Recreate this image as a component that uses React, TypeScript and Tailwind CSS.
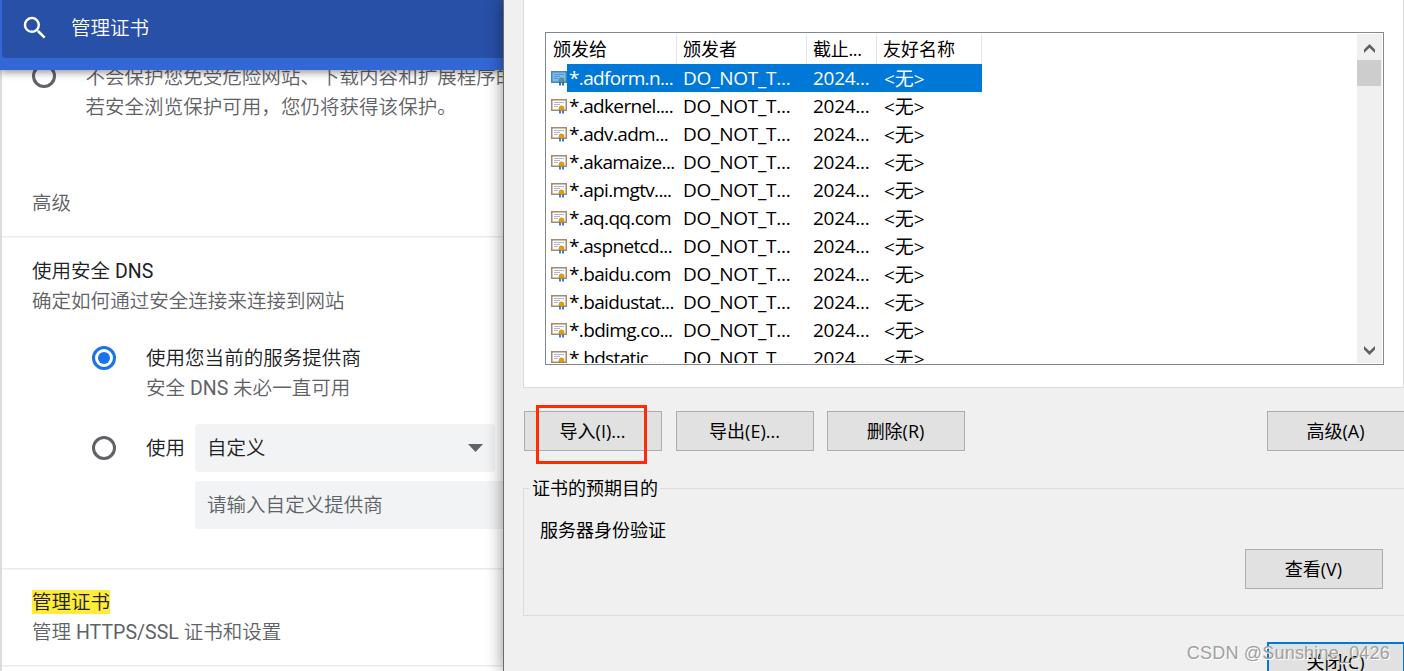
import { clsx } from "clsx";
import { MdSearch } from "react-icons/md";

const certificates = [
  "*.adform.n...",
  "*.adkernel....",
  "*.adv.adm...",
  "*.akamaize...",
  "*.api.mgtv....",
  "*.aq.qq.com",
  "*.aspnetcd...",
  "*.baidu.com",
  "*.baidustat...",
  "*.bdimg.co...",
  "*.bdstatic....",
];

const Radio = ({ checked }: { checked?: boolean }) => (
  <span
    className={clsx(
      "flex size-6 shrink-0 items-center justify-center rounded-full border-3",
      checked ? "border-[#1a73e8]" : "border-[#5f6368]"
    )}
  >
    {checked && <span className="size-3 rounded-full bg-[#1a73e8]" />}
  </span>
);

const Divider = () => (
  <div className="h-0.5 shrink-0 border-t border-[#ebebeb] bg-[#f5f5f5]" />
);

const CertIcon = ({ selected }: { selected?: boolean }) => (
  <svg width="16" height="15" viewBox="0 0 16 15" className="mt-px shrink-0">
    <rect
      x="0.75"
      y="0.75"
      width="14.5"
      height="10.5"
      fill={selected ? "#7cbcec" : "#fffdf8"}
      stroke={selected ? "#4b86ad" : "#a08a70"}
      strokeWidth="1.5"
    />
    <path
      d="M3 3.5h10M3 5.5h6M3 7.5h4"
      stroke={selected ? "#5a97d8" : "#b0b2e0"}
      strokeWidth="1"
    />
    <path
      d="M9 11v3.5M12 11v3.5"
      stroke={selected ? "#1263cf" : "#2f6cf0"}
      strokeWidth="1.8"
    />
    <circle
      cx="10.5"
      cy="9.3"
      r="2.4"
      fill={selected ? "#64938e" : "#e0a00c"}
      stroke={selected ? "#467b83" : "#c48a08"}
      strokeWidth="0.8"
    />
  </svg>
);

const DialogButton = ({ label, className }: { label: string; className?: string }) => (
  <button
    className={clsx(
      "h-10 w-[138px] shrink-0 border-[#adadad] bg-[#e1e1e1] pr-px text-center whitespace-nowrap",
      className ?? "border"
    )}
  >
    {label}
  </button>
);

const Settings = () => (
  <div className="flex h-full w-[503px] shrink-0 flex-col bg-[#dcdcdc] font-['Roboto','Noto_Sans_CJK_SC',sans-serif] text-[19.5px] leading-[30px] font-[350] tracking-[0.04px] text-[#5f6368]">
    <header className="relative z-10 h-[70px] shrink-0 bg-[#3367d6] pl-0.5 shadow-[0_2px_8px_rgba(0,0,0,0.45)]">
      <div className="flex h-[58px] items-center rounded-bl bg-[#2850a7] pl-[18px] text-white">
        <MdSearch className="-mt-0.5 size-[30px]" />
        <span className="ml-[21px]">管理证书</span>
      </div>
    </header>

    <div className="ml-0.5 flex flex-1 flex-col bg-white">
      <div className="-mt-[7px] flex shrink-0 pl-[30px] whitespace-nowrap">
        <div className="pt-px">
          <Radio />
        </div>
        <div className="ml-[29.5px]">
          <p>不会保护您免受危险网站、下载内容和扩展程序的</p>
          <p>若安全浏览保护可用，您仍将获得该保护。</p>
        </div>
      </div>

      <h2 className="mt-[66px] mb-[17px] pl-[30px]">高级</h2>
      <Divider />

      <div className="mt-[19px] pl-[30px]">
        <p className="text-[#202124]">
          使用安全 <span className="font-normal">DNS</span>
        </p>
        <p>确定如何通过安全连接来连接到网站</p>
      </div>

      <div className="mt-[27px] flex pl-[90px]">
        <div className="pt-0.5">
          <Radio checked />
        </div>
        <div className="ml-[30px]">
          <p className="text-[#202124]">使用您当前的服务提供商</p>
          <p>
            安全 <span className="font-normal">DNS</span> 未必一直可用
          </p>
        </div>
      </div>

      <div className="mt-5 flex items-center pl-[90px] text-[#202124]">
        <Radio />
        <span className="mt-0.5 ml-[30px] w-[49px] whitespace-nowrap">使用</span>
        <div className="flex h-12 w-[300px] items-center justify-between rounded bg-[#f1f3f4] pr-3 pl-3">
          <span className="mt-0.5">自定义</span>
          <svg width="15" height="8" viewBox="0 0 15 8">
            <path d="M0 0h15L7.5 8z" fill="#5f6368" />
          </svg>
        </div>
      </div>
      <div className="mt-[9px] mb-[39px] ml-[193px] flex h-12 shrink-0 items-center rounded-l bg-[#f1f3f4] pt-0.5 pl-3">
        请输入自定义提供商
      </div>
      <Divider />

      <div className="mt-[18px] mb-[17px] pl-[30px]">
        <p className="flex h-[30px] items-center">
          <mark className="-mt-0.5 h-6 bg-[#ffeb3b] leading-[26px] text-[#202124]">管理证书</mark>
        </p>
        <p>
          管理 <span className="font-normal">HTTPS/SSL</span> 证书和设置
        </p>
      </div>
      <Divider />
    </div>
  </div>
);

const CertificateList = () => (
  <div className="flex h-[333px] w-[839px] overflow-hidden border border-[#828790] bg-white">
    <div className="h-[330px] w-[436px] shrink-0 overflow-hidden pt-px">
      <div className="flex h-[30px] items-center text-[18px]">
        <span className="h-full w-[131px] border-r border-[#e5e5e5] pl-[7px] leading-[31px]">颁发给</span>
        <span className="h-full w-[130px] border-r border-[#e5e5e5] pl-1.5 leading-[31px]">颁发者</span>
        <span className="h-full w-[70px] border-r border-[#e5e5e5] pl-1.5 leading-[31px] tracking-[-0.3px]">截止...</span>
        <span className="h-full w-[105px] border-r border-[#e5e5e5] pl-1.5 leading-[31px]">友好名称</span>
      </div>
      {certificates.map((name, index) => (
        <div
          key={name}
          className={clsx(
            "flex h-7 items-center pl-[5px] text-[19px] leading-7 whitespace-nowrap",
            index === 0 && "text-white"
          )}
        >
          <CertIcon selected={index === 0} />
          <div className={clsx("flex h-7 flex-1", index === 0 && "bg-[#0078d7]")}>
            <span className="w-[116px] pl-0.5 tracking-[-0.65px]">{name}</span>
            <span className="w-[130px] tracking-[-0.25px]">DO_NOT_T...</span>
            <span className="w-[71px] tracking-[-0.3px]">2024...</span>
            <span className="pt-px">&lt;无&gt;</span>
          </div>
        </div>
      ))}
    </div>
    <div className="my-px mr-px ml-auto flex w-[25px] flex-col items-center bg-[#f0f0f0]">
      <svg width="11" height="9" viewBox="0 0 11 9" className="mt-[10px] shrink-0">
        <path d="M0 9V5.5L5.5 0 11 5.5V9L5.5 3.7z" fill="#606060" />
      </svg>
      <div className="mt-[7px] h-[26px] w-6 shrink-0 self-start bg-[#cdcdcd]" />
      <svg width="11" height="9" viewBox="0 0 11 9" className="mt-auto mb-2 shrink-0">
        <path d="M0 0v3.5L5.5 9 11 3.5V0L5.5 5.3z" fill="#606060" />
      </svg>
    </div>
  </div>
);

const CertificateDialog = () => (
  <div className="relative z-20 h-full flex-1 overflow-hidden border-l border-[#6b6b6b] bg-[#f0f0f0] pl-[19px] font-['Open_Sans','Noto_Sans_CJK_SC',sans-serif] text-[18px] text-black shadow-[0_0_16px_rgba(0,0,0,0.45)]">
    <div className="h-[388px] border-x border-b border-[#dcdcdc] bg-white pt-8 pl-[21px]">
      <CertificateList />
    </div>

    <div className="mt-[23px] ml-px flex gap-[13px]">
      <div className="relative">
        <DialogButton label="导入(I)..." />
        <div className="absolute -top-1.5 left-3 h-[59px] w-[111px] border-3 border-[#ff2b06]" />
      </div>
      <DialogButton label="导出(E)..." className="ml-px border" />
      <DialogButton label="删除(R)" className="border" />
      <DialogButton label="高级(A)" className="mr-[-1px] ml-auto border" />
    </div>

    <fieldset className="mt-[25px] h-[140px] border border-r-0 border-[#dcdcdc] pl-[15px]">
      <legend className="-ml-[9px] h-6 px-0.5 leading-6">证书的预期目的</legend>
      <p className="mt-[18px] mb-[7px] ml-px leading-6">服务器身份验证</p>
      <DialogButton label="查看(V)" className="ml-[706px] border" />
    </fieldset>

    <DialogButton label="关闭(C)" className="mt-[26px] ml-[744px] border-2 !border-[#0078d7]" />
    <div className="absolute right-[14px] bottom-1.5 font-['Liberation_Sans',sans-serif] text-[18px] leading-6 tracking-[0.2px] whitespace-nowrap text-[#a0a0a0] [text-shadow:1px_1px_0_#fff]">
      CSDN @Sunshine_0426
    </div>
  </div>
);

const App = () => {
  return (
    <div className="flex h-[671px] w-[1404px] overflow-hidden bg-white">
      <Settings />
      <CertificateDialog />
    </div>
  );
};

export default App;
